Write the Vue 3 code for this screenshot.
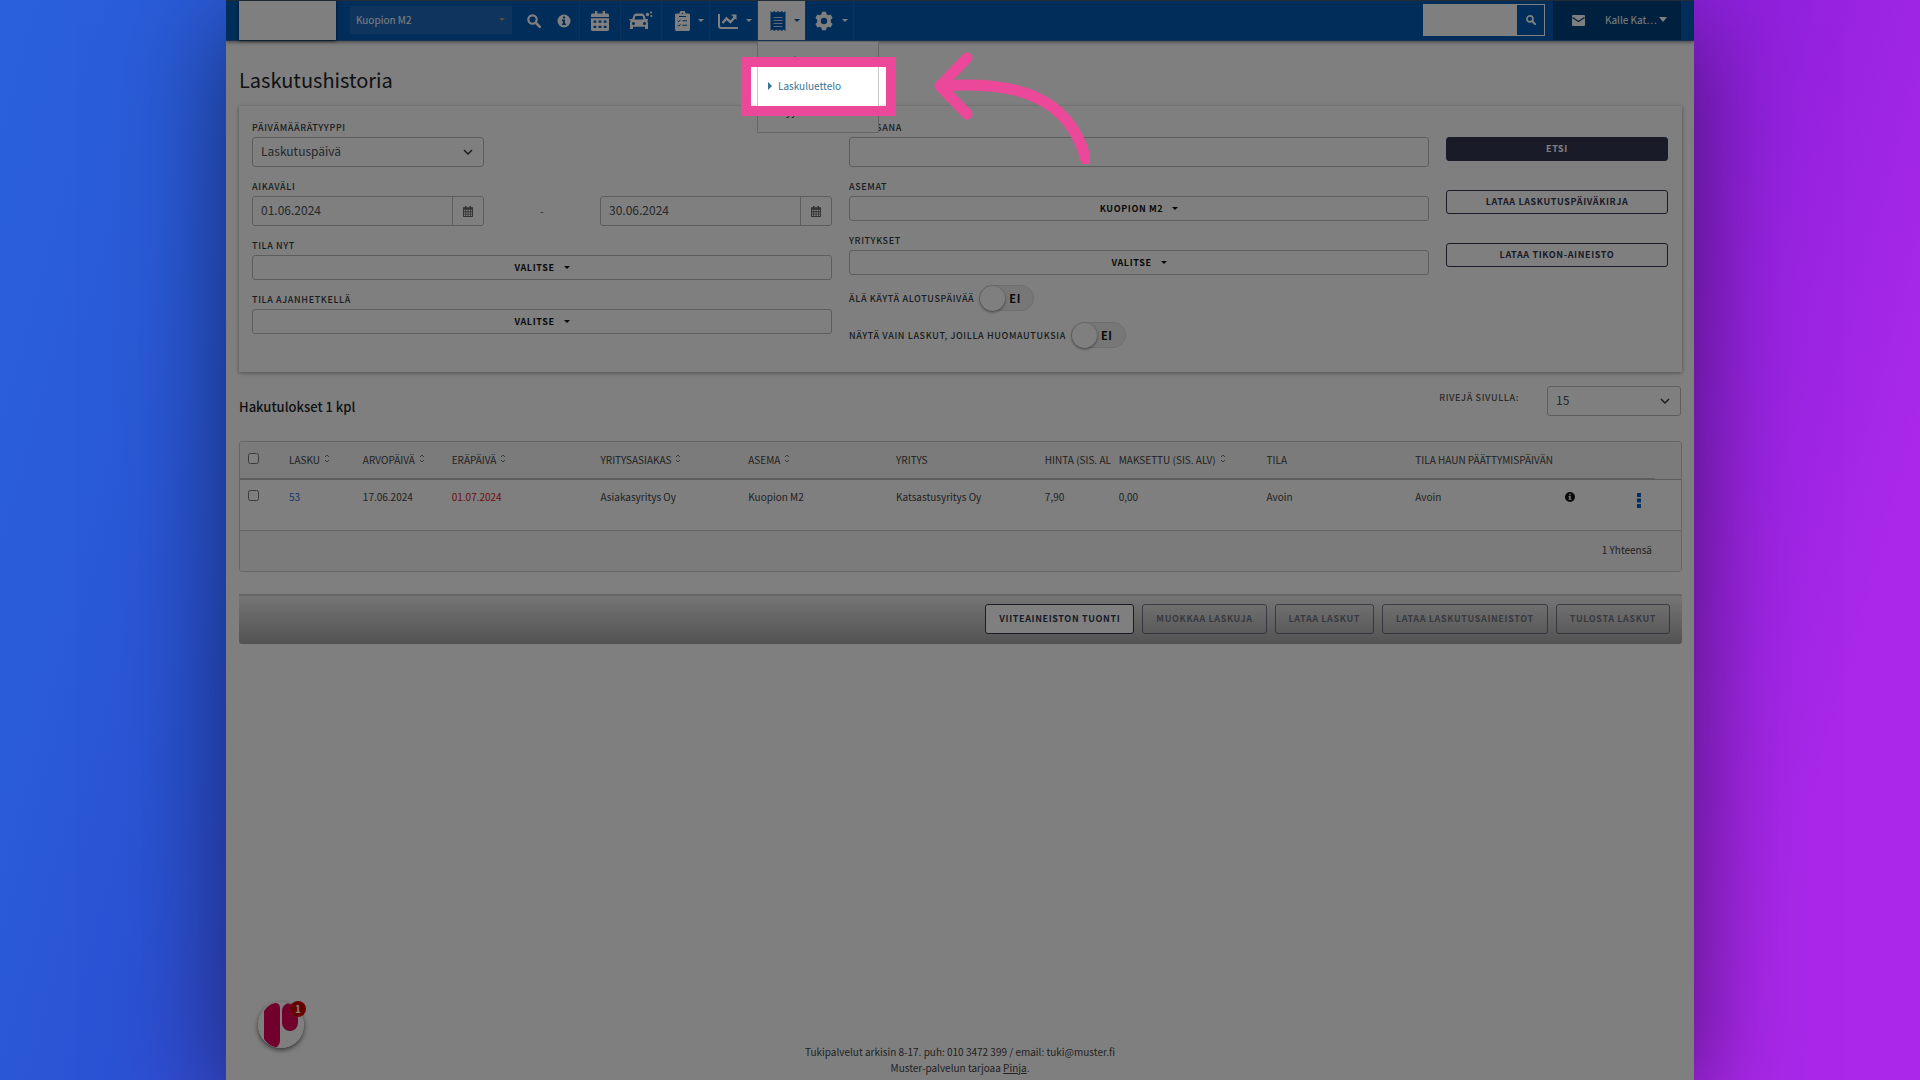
<script setup>
import { ref } from 'vue'

const station = ref('Kuopion M2')
const dateType = ref('Laskutuspäivä')
const startDate = ref('01.06.2024')
const endDate = ref('30.06.2024')
const keyword = ref('')
const rowsPerPage = ref('15')
const ignoreStart = ref(false)
const onlyRemarks = ref(false)

const columns = [
  { label: 'LASKU', sort: true, width: 74 },
  { label: 'ARVOPÄIVÄ', sort: true, width: 89 },
  { label: 'ERÄPÄIVÄ', sort: true, width: 149 },
  { label: 'YRITYSASIAKAS', sort: true, width: 148 },
  { label: 'ASEMA', sort: true, width: 148 },
  { label: 'YRITYS', sort: false, width: 149 },
  { label: 'HINTA (SIS. AL', sort: false, width: 74 },
  { label: 'MAKSETTU (SIS. ALV)', sort: true, width: 148 },
  { label: 'TILA', sort: false, width: 149 },
  { label: 'TILA HAUN PÄÄTTYMISPÄIVÄN', sort: false, width: 150 },
]
const total = 1443
const pct = (w) => ({ width: (w / total) * 100 + '%' })

const actions = [
  { label: 'VIITEAINEISTON TUONTI', enabled: true },
  { label: 'MUOKKAA LASKUJA', enabled: false },
  { label: 'LATAA LASKUT', enabled: false },
  { label: 'LATAA LASKUTUSAINEISTOT', enabled: false },
  { label: 'TULOSTA LASKUT', enabled: false },
]
</script>

<template>
  <div class="backdrop">
    <div class="window">
      <header class="topbar">
        <div class="logo"></div>
        <div class="station">
          <select v-model="station" aria-label="Asema"><option>Kuopion M2</option></select>
          <i class="caret"></i>
        </div>
        <nav class="nav">
          <button class="tool" aria-label="Haku">
            <svg width="14" height="14" viewBox="0 0 14 14"><circle cx="5.5" cy="5.5" r="4.2" fill="none" stroke="currentColor" stroke-width="2.2" /><path d="M8.8 8.8l4 4" stroke="currentColor" stroke-width="2.6" stroke-linecap="round" /></svg>
          </button>
          <button class="tool" aria-label="Tiedot">
            <svg width="14" height="14" viewBox="0 0 14 14"><path fill="currentColor" fill-rule="evenodd" d="M7 .5a6.5 6.5 0 1 0 0 13 6.5 6.5 0 0 0 0-13zM6 2.6h2v2H6zM5 5.6h3v3.800h1V11H5V9.400h1V7.200H5z" /></svg>
          </button>
          <button class="item" aria-label="Kalenteri">
            <svg width="18" height="20" viewBox="0 0 18 20"><path fill="currentColor" fill-rule="evenodd" d="M4 0h2.400v2.500h5.200V0H14v2.500h2.500A1.500 1.500 0 0 1 18 4v2H0V4a1.500 1.500 0 0 1 1.500-1.500H4zM0 7.200h18v11.300a1.500 1.500 0 0 1-1.500 1.500h-15A1.500 1.500 0 0 1 0 18.500zM2.500 9.500v2.200h2.700V9.500zm5.100 0v2.200h2.800V9.500zm5.200 0v2.200h2.700V9.500zM2.500 14.800V17h2.700v-2.200zm5.100 0V17h2.800v-2.200zm5.200 0V17h2.700v-2.200z" /></svg>
          </button>
          <button class="item" aria-label="Ajoneuvot">
            <svg width="24" height="20" viewBox="0 0 24 20"><path fill="currentColor" fill-rule="evenodd" d="M4.500 4.500Q5.200 2.500 7.200 2.500h5.600q2 0 2.700 2L16.700 8H19v1.700h-1.200q1.200.8 1.200 2.300v6h-3v-2.200H4V18H1v-6q0-1.500 1.200-2.300H.5V8h2.800zM6.500 5L5.400 8.600h9.200L13.500 5zM4.500 11a1.500 1.500 0 1 0 0 3 1.500 1.500 0 0 0 0-3zm11 0a1.500 1.500 0 1 0 0 3 1.500 1.500 0 0 0 0-3z" /><circle cx="18.500" cy="3.500" r="1.700" fill="currentColor" /><circle cx="22" cy="1.500" r="1.100" fill="currentColor" /><circle cx="22.300" cy="5" r="1.100" fill="currentColor" /></svg>
          </button>
          <button class="item drop" aria-label="Tehtävät">
            <svg width="15" height="20" viewBox="0 0 15 20"><path fill="currentColor" fill-rule="evenodd" d="M4.500 2.500a3 3 0 0 1 6 0h3A1.500 1.500 0 0 1 15 4v14.500a1.500 1.500 0 0 1-1.500 1.500h-12A1.500 1.500 0 0 1 0 18.500V4a1.500 1.500 0 0 1 1.500-1.500zM6.700 2.500a.8.8 0 1 0 1.600 0 .8.8 0 0 0-1.600 0zM4 5v1h7V5zM7.500 9.300v1h4.500v-1zm0 4.500v1h4.500v-1z" /><path d="M2.800 9.700l1 1 1.700-1.900M2.800 14.200l1 1 1.700-1.900" fill="none" class="tick" /></svg>
            <i class="caret"></i>
          </button>
          <button class="item drop" aria-label="Raportit">
            <svg width="20" height="16" viewBox="0 0 20 16"><path d="M1 1v11.500Q1 15 3.500 15H20" fill="none" stroke="currentColor" stroke-width="2" /><path d="M4.500 10l4-4.500 4 3.500L17 4" fill="none" stroke="currentColor" stroke-width="2.400" /><path d="M13 1.500h5.500V7z" fill="currentColor" /></svg>
            <i class="caret"></i>
          </button>
          <div class="menu-wrap">
            <button class="item drop open" aria-label="Laskutus" aria-expanded="true">
              <svg width="16" height="20" viewBox="0 0 16 20"><path fill="currentColor" d="M.5 0l1.900 1.400L4.300 0l1.900 1.400L8 0l1.900 1.400L11.700 0l1.900 1.400L15.500 0v20l-1.900-1.400-1.900 1.400-1.800-1.400L8 20l-1.800-1.400L4.300 20l-1.900-1.400L.5 20z" /><path d="M3.500 6.500h9M3.500 9.500h9M3.500 12.500h9M3.500 15.500h9" stroke="#fff" stroke-width="1" opacity=".75" /></svg>
              <i class="caret"></i>
            </button>
            <div class="menu">
              <a href="#"><i></i>Laskuttamattomat</a>
              <a href="#"><i></i>Laskuluettelo</a>
              <a href="#"><i></i>Myyntireskontra</a>
            </div>
            <div class="spotlight">
              <svg class="arrow" width="160" height="120" viewBox="0 0 160 120"><path d="M37 14L10 42L37 70M12 42C82 37 139 50 156 116" fill="none" stroke="#ec4899" stroke-width="11" stroke-linecap="round" stroke-linejoin="round" /></svg>
            </div>
          </div>
          <button class="item drop" aria-label="Asetukset">
            <svg width="20" height="20" viewBox="0 0 20 20"><path fill="currentColor" fill-rule="evenodd" d="M8 .8h4l.6 2.500 1.500.9 2.500-.7 2 3.400L16.800 8.700v2.600l1.800 1.800-2 3.400-2.500-.7-1.500.9-.6 2.500H8l-.6-2.500-1.500-.9-2.500.7-2-3.400 1.800-1.800V8.700L1.400 6.900l2-3.400 2.500.7 1.500-.9zM10 6.800a3.200 3.200 0 1 0 0 6.400 3.200 3.200 0 0 0 0-6.400z" /></svg>
            <i class="caret"></i>
          </button>
        </nav>
        <form class="quick" @submit.prevent>
          <input type="text" aria-label="Pikahaku" />
          <button aria-label="Hae">
            <svg width="10" height="10" viewBox="0 0 14 14"><circle cx="5.500" cy="5.500" r="4.200" fill="none" stroke="currentColor" stroke-width="2.400" /><path d="M8.800 8.800l4 4" stroke="currentColor" stroke-width="2.800" stroke-linecap="round" /></svg>
          </button>
        </form>
        <div class="user">
          <svg width="13" height="11" viewBox="0 0 13 11"><rect width="13" height="11" rx="1" fill="currentColor" /><path d="M.5 2.500l6 4 6-4" fill="none" stroke="#00417f" stroke-width="1.300" /></svg>
          <button>Kalle Kat… <i class="caret big"></i></button>
        </div>
      </header>

      <main class="content">
        <h1>Laskutushistoria</h1>

        <form class="card" @submit.prevent>
          <div class="col">
            <div class="field">
              <label for="dt">PÄIVÄMÄÄRÄTYYPPI</label>
              <div class="select narrow">
                <select id="dt" v-model="dateType"><option>Laskutuspäivä</option></select>
                <svg width="10" height="7" viewBox="0 0 10 7"><path d="M1 1l4 4 4-4" fill="none" stroke="#343a40" stroke-width="1.500" /></svg>
              </div>
            </div>
            <div class="field">
              <label for="from">AIKAVÄLI</label>
              <div class="range">
                <div class="date">
                  <input id="from" v-model="startDate" type="text" />
                  <button aria-label="Valitse alkupäivä"><svg width="10" height="11" viewBox="0 0 10 11"><path fill="#666" fill-rule="evenodd" d="M2 0h1.500v1.300h3V0H8v1.300h2V11H0V1.300h2zM1 3.800v1.500h1.300V3.800zm2.200 0v1.500h1.500V3.800zm2.300 0v1.500H7V3.800zm2.300 0v1.500H9V3.800zM1 6.200v1.500h1.300V6.200zm2.200 0v1.500h1.500V6.200zm2.300 0v1.500H7V6.200zm2.300 0v1.500H9V6.200zM1 8.600V10h1.300V8.600zm2.200 0V10h1.500V8.600zm2.300 0V10H7V8.600zm2.300 0V10H9V8.600z" /></svg></button>
                </div>
                <span>-</span>
                <div class="date">
                  <input v-model="endDate" type="text" aria-label="Loppupäivä" />
                  <button aria-label="Valitse loppupäivä"><svg width="10" height="11" viewBox="0 0 10 11"><path fill="#666" fill-rule="evenodd" d="M2 0h1.500v1.300h3V0H8v1.300h2V11H0V1.300h2zM1 3.800v1.500h1.300V3.800zm2.200 0v1.500h1.500V3.800zm2.300 0v1.500H7V3.800zm2.300 0v1.500H9V3.800zM1 6.200v1.500h1.300V6.200zm2.200 0v1.500h1.500V6.200zm2.300 0v1.500H7V6.200zm2.300 0v1.500H9V6.200zM1 8.600V10h1.300V8.600zm2.200 0V10h1.500V8.600zm2.300 0V10H7V8.600zm2.300 0V10H9V8.600z" /></svg></button>
                </div>
              </div>
            </div>
            <div class="field">
              <label for="now">TILA NYT</label>
              <button id="now" class="pick">VALITSE <i class="caret"></i></button>
            </div>
            <div class="field">
              <label for="then">TILA AJANHETKELLÄ</label>
              <button id="then" class="pick">VALITSE <i class="caret"></i></button>
            </div>
          </div>

          <div class="col">
            <div class="field">
              <label for="kw">HAKUSANA</label>
              <input id="kw" v-model="keyword" class="text" type="text" />
            </div>
            <div class="field">
              <label for="st">ASEMAT</label>
              <button id="st" class="pick">KUOPION M2 <i class="caret"></i></button>
            </div>
            <div class="field">
              <label for="co">YRITYKSET</label>
              <button id="co" class="pick">VALITSE <i class="caret"></i></button>
            </div>
            <div class="toggles">
              <label class="toggle">ÄLÄ KÄYTÄ ALOTUSPÄIVÄÄ
                <input v-model="ignoreStart" type="checkbox" role="switch" /><span class="track"><b>EI</b></span>
              </label>
              <label class="toggle">NÄYTÄ VAIN LASKUT, JOILLA HUOMAUTUKSIA
                <input v-model="onlyRemarks" type="checkbox" role="switch" /><span class="track"><b>EI</b></span>
              </label>
            </div>
          </div>

          <div class="buttons">
            <button class="btn dark">ETSI</button>
            <button class="btn">LATAA LASKUTUSPÄIVÄKIRJA</button>
            <button class="btn">LATAA TIKON-AINEISTO</button>
          </div>
        </form>

        <div class="results-head">
          <h2>Hakutulokset 1 kpl</h2>
          <div class="per-page">
            <label for="pp">RIVEJÄ SIVULLA:</label>
            <div class="select">
              <select id="pp" v-model="rowsPerPage"><option>15</option></select>
              <svg width="10" height="7" viewBox="0 0 10 7"><path d="M1 1l4 4 4-4" fill="none" stroke="#343a40" stroke-width="1.500" /></svg>
            </div>
          </div>
        </div>

        <div class="table-box">
          <table>
            <colgroup>
              <col :style="pct(41)" />
              <col v-for="c in columns" :key="c.label" :style="pct(c.width)" />
              <col :style="pct(72)" />
              <col :style="pct(26)" />
              <col :style="pct(26)" />
            </colgroup>
            <thead>
              <tr>
                <th><input type="checkbox" aria-label="Valitse kaikki" /></th>
                <th v-for="c in columns" :key="c.label">
                  <div>{{ c.label }}<svg v-if="c.sort" width="6" height="9" viewBox="0 0 6 9"><path d="M1 3l2-2 2 2M1 6l2 2 2-2" fill="none" stroke="#777" /></svg></div>
                </th>
                <th></th><th></th><th></th>
              </tr>
            </thead>
            <tbody>
              <tr>
                <td><input type="checkbox" aria-label="Valitse lasku 53" /></td>
                <td><a href="#">53</a></td>
                <td>17.06.2024</td>
                <td class="due">01.07.2024</td>
                <td>Asiakasyritys Oy</td>
                <td>Kuopion M2</td>
                <td>Katsastusyritys Oy</td>
                <td>7,90</td>
                <td>0,00</td>
                <td>Avoin</td>
                <td>Avoin</td>
                <td class="info"><svg width="10" height="10" viewBox="0 0 14 14"><path fill="#111" fill-rule="evenodd" d="M7 0a7 7 0 1 0 0 14A7 7 0 0 0 7 0zM6 2.600h2v2H6zM5 5.600h3v3.800h1V11H5V9.400h1V7.200H5z" /></svg></td>
                <td class="more"><button aria-label="Toiminnot"><svg width="4" height="15" viewBox="0 0 4 15"><path fill="#0060c0" d="M0 0h4v4H0zM0 5.500h4v4H0zM0 11h4v4H0z" /></svg></button></td>
                <td></td>
              </tr>
            </tbody>
          </table>
          <div class="table-foot">1 Yhteensä</div>
        </div>

        <div class="actionbar">
          <button v-for="a in actions" :key="a.label" class="action" :disabled="!a.enabled">{{ a.label }}</button>
        </div>
      </main>

      <footer class="footer">
        <p>Tukipalvelut arkisin 8-17. puh: 010 3472 399 / email: tuki@muster.fi</p>
        <p>Muster-palvelun tarjoaa <a href="#">Pinja</a>.</p>
      </footer>

      <button class="chat" aria-label="Keskustelu">
        <svg width="46" height="46" viewBox="0 0 46 46"><defs><clipPath id="disc"><circle cx="23" cy="23" r="23" /></clipPath></defs><circle cx="23" cy="23" r="23" fill="#fff" /><g fill="#e5005b" clip-path="url(#disc)"><path d="M6 9Q12 1 17 1q5 0 5 5v33q0 3-3 6H16Q9 42 6 37z" /><rect x="24" y="1" width="16" height="28" rx="8" /></g></svg>
        <span>1</span>
      </button>
    </div>
  </div>
</template>

<style>
body { margin: 0; }
</style>

<style scoped>
* { box-sizing: border-box; }
.backdrop {
  min-height: 100vh;
  display: flex;
  padding: 0 226px;
  background: linear-gradient(105deg, #2a60dc 0%, #2a5bd8 10%, #2a52d4 18%, #6d28d9 50%, #9021dd 80%, #a928ea 92%, #a928ea 100%);
  overflow: hidden;
  font-family: "Noto Sans CJK SC", "Noto Sans", sans-serif;
}
.window {
  position: relative;
  flex: 1;
  min-width: 0;
  display: flex;
  flex-direction: column;
  overflow: hidden;
  background: #fff;
  color: #444;
  font-size: 10px;
  line-height: 16px;
  box-shadow: 0 24px 100px rgba(0, 0, 0, .5);
}
button, input, select { font: inherit; color: inherit; margin: 0; }
button { padding: 0; border: 0; background: none; }
svg { display: block; flex: none; }
.caret {
  display: inline-block;
  border: 3px solid transparent;
  border-top-color: currentColor;
  border-bottom: 0;
}
.caret.big { border-width: 5px 4px 0; vertical-align: 2px; }

.topbar {
  position: relative;
  z-index: 2;
  display: flex;
  height: 41px;
  padding-left: 13px;
  background: #005ab2;
  border-top: 1px solid #48586c;
  border-bottom: 1px solid #2b67a4;
  box-shadow: 0 1px 4px rgba(0, 0, 0, .5);
  color: #fff;
}
.logo { width: 97px; background: #fff; box-shadow: 0 1px 3px rgba(0, 0, 0, .6); }
.station { position: relative; width: 162px; height: 28px; margin: 5px 0 0 14px; }
.station select {
  width: 100%;
  height: 100%;
  padding: 0 20px 0 6px;
  border: 0;
  background: #1e6abc;
  appearance: none;
}
.station .caret { position: absolute; right: 7px; top: 12px; color: #999; }
.nav { display: flex; padding-left: 7px; }
.tool { width: 30px; display: flex; align-items: center; justify-content: center; }
.item {
  width: 41px;
  height: 39px;
  display: flex;
  align-items: center;
  justify-content: center;
  gap: 8px;
  border-left: 1px solid #1767b8;
}
.drop { width: 48px; justify-content: flex-end; padding-right: 5px; }
.nav > .item:last-child { width: 49px; border-right: 1px solid #1767b8; }
.tick { stroke: #005ab2; }
.menu-wrap { position: relative; }
.open { background: #fff; color: #005ab2; }
.menu {
  position: absolute;
  left: 0;
  top: 40px;
  width: 122px;
  padding: 6px 0 9px;
  border: 1px solid #ccc;
  background: #fff;
}
.menu a {
  display: flex;
  align-items: center;
  gap: 6px;
  height: 25px;
  padding-left: 10px;
  color: #34749a;
  text-decoration: none;
}
.menu a:not(:nth-child(2)) { color: #222; }
.menu i { border: 4px solid transparent; border-left-color: currentColor; border-right: 0; }
.spotlight {
  position: absolute;
  left: -16px;
  top: 56px;
  width: 155px;
  height: 59px;
  border: 10px solid #ec4899;
  box-shadow: 0 0 0 4000px rgba(0, 0, 0, .5);
  pointer-events: none;
}
.arrow { position: absolute; left: 179px; top: -23px; }
.quick { display: flex; margin: 3px 0 4px auto; border: 1px solid #fff; }
.quick input { width: 93px; border: 0; padding: 0 6px; background: #fff; color: #333; }
.quick button { width: 27px; display: flex; align-items: center; justify-content: center; }
.user {
  display: flex;
  align-items: center;
  gap: 20px;
  width: 128px;
  margin: 0 13px 0 8px;
  padding: 0 0 1px 19px;
  background: #00417f;
  white-space: nowrap;
}

.content { padding: 0 12px 0 13px; }
h1 { margin: 0; padding: 25px 0 12px; font-size: 20px; line-height: 28px; font-weight: 400; color: #212529; }
.card {
  display: grid;
  grid-template-columns: 580fr 580fr 222fr;
  gap: 17px;
  padding: 12px 14px 24px 13px;
  box-shadow: 0 1px 4px rgba(0, 0, 0, .4);
}
.col { display: flex; flex-direction: column; gap: 10px; }
.field { display: flex; flex-direction: column; }
.field label, .toggle, .per-page label {
  font-size: 9px;
  line-height: 19px;
  font-weight: 500;
  letter-spacing: .07em;
  color: #343a40;
}
.select { position: relative; height: 30px; }
.select select, .text, .date {
  width: 100%;
  height: 30px;
  border: 1px solid #bbb;
  border-radius: 3px;
  background: #fff;
  font-size: 12px;
  color: #495057;
}
.select select { padding: 0 24px 2px 8px; appearance: none; }
.select svg { position: absolute; right: 11px; top: 12px; pointer-events: none; }
.narrow { width: 40%; }
.range { display: grid; grid-template-columns: 2fr 1fr 2fr; align-items: center; text-align: center; }
.date { display: flex; }
.date input { flex: 1; min-width: 0; border: 0; padding: 0 8px 2px; background: none; }
.date button { width: 31px; border-left: 1px solid #bbb; display: flex; align-items: center; justify-content: center; }
.pick {
  display: flex;
  align-items: center;
  justify-content: center;
  gap: 9px;
  height: 25px;
  border: 1px solid #bbb;
  border-radius: 3px;
  font-size: 9px;
  font-weight: 700;
  letter-spacing: .07em;
  color: #111;
}
.toggles { display: flex; flex-direction: column; gap: 11px; }
.toggle { display: flex; align-items: center; gap: 5px; height: 26px; }
.toggle input { position: absolute; opacity: 0; }
.track {
  display: flex;
  align-items: center;
  width: 55px;
  height: 26px;
  border: 1px solid #ddd;
  border-radius: 13px;
  background: #efefef;
}
.track::before { content: ""; width: 25px; height: 25px; border-radius: 50%; background: #fff; box-shadow: 0 1px 3px rgba(0, 0, 0, .5); }
.track b { margin-left: 4px; font-size: 11px; color: #111; }
.buttons { display: flex; flex-direction: column; gap: 29px; padding-top: 19px; }
.btn, .action {
  height: 24px;
  border: 1px solid #343650;
  border-radius: 3px;
  background: #fff;
  font-size: 9px;
  font-weight: 700;
  letter-spacing: .07em;
  color: #343650;
}
.btn.dark { background: #343650; color: #fff; }

.results-head { display: flex; justify-content: space-between; padding: 14px 1px 24px 0; }
h2 { margin: 0; padding-top: 11px; font-size: 13px; line-height: 20px; font-weight: 500; color: #212529; }
.per-page { display: flex; gap: 28px; }
.per-page label { padding-top: 2px; color: #555; }
.per-page .select { width: 134px; }

.table-box { border: 1px solid #ccc; border-radius: 3px; overflow: hidden; }
table { width: 100%; table-layout: fixed; border-collapse: collapse; }
th, td { padding: 0 0 0 8px; text-align: left; font-weight: 400; white-space: nowrap; }
thead { background: #f6f6f6; }
th { height: 37px; border-bottom: 1px solid #bbb; }
th:not(:last-child) { border-bottom-width: 2px; }
th div { display: flex; align-items: center; gap: 4px; }
th svg { margin-bottom: 4px; }
td { height: 51px; padding-top: 9px; vertical-align: top; }
td a { color: #2a6fdb; text-decoration: none; }
.due { color: #e02020; }
th input, td input { display: block; width: 11px; height: 11px; margin-top: 1px; }
th input { margin-top: 0; margin-bottom: 4px; }
.info svg { margin-top: 3px; }
.more button { display: block; margin-top: 4px; width: 4px; }
.table-foot {
  height: 41px;
  padding: 11px 29px 0 0;
  border-top: 1px solid #ccc;
  background: #f6f6f6;
  text-align: right;
}
.actionbar {
  display: flex;
  justify-content: flex-end;
  gap: 8px;
  margin-top: 22px;
  padding: 8px 12px 10px;
  border-top: 2px solid #ccc;
  border-radius: 0 0 3px 3px;
  background: linear-gradient(#ebebeb, #a6a6a6);
}
.action { height: 30px; padding: 0 13px; }
.action:disabled { background: none; opacity: .6; }

.footer { margin-top: auto; padding-bottom: 4px; text-align: center; }
.footer p { margin: 0; }
.footer a { color: inherit; text-decoration: underline; }
.chat {
  position: absolute;
  left: 32px;
  bottom: 32px;
  width: 46px;
  height: 46px;
  border-radius: 50%;
  box-shadow: 0 2px 5px rgba(0, 0, 0, .6);
}
.chat span {
  position: absolute;
  right: -2px;
  top: -1px;
  width: 16px;
  border-radius: 8px;
  background: #d00000;
  color: #fff;
  font-weight: 700;
}
</style>
